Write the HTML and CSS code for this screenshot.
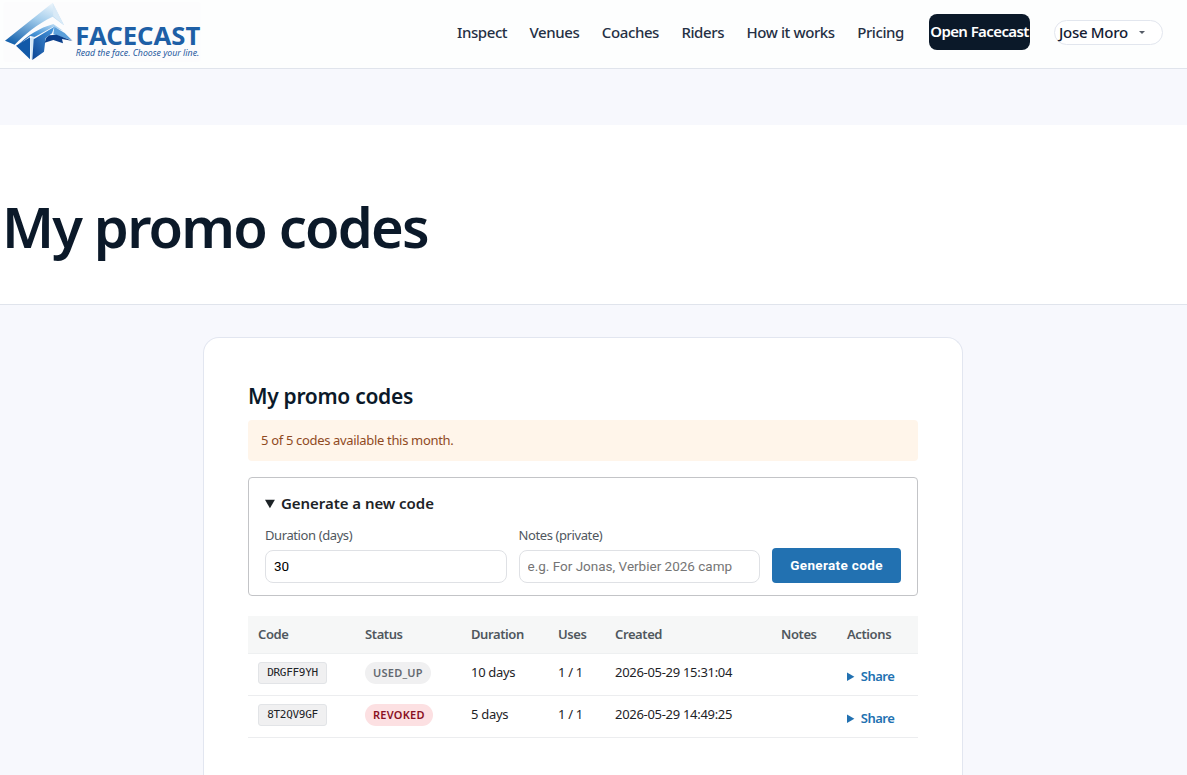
FILE: index.html
```html
<!DOCTYPE html>
<html lang="en">
<head>
  <meta charset="UTF-8" />
  <meta name="viewport" content="width=device-width, initial-scale=1" />
  <title>My promo codes - Facecast</title>
  <link rel="stylesheet" href="styles.css">
</head>
<body>

  <header class="topbar">
    <a class="logo" href="#">
      <svg width="210" height="68" viewBox="0 0 630 204" role="img" aria-label="Facecast">
        <defs>
          <linearGradient id="peak" x1="0.8" y1="0" x2="0.2" y2="1">
            <stop offset="0" stop-color="#eef6fc" />
            <stop offset="0.4" stop-color="#a3cdec" />
            <stop offset="1" stop-color="#1763ae" />
          </linearGradient>
          <linearGradient id="face" x1="1" y1="0" x2="0" y2="1">
            <stop offset="0" stop-color="#d5eafa" />
            <stop offset="0.5" stop-color="#4b98d8" />
            <stop offset="1" stop-color="#0c499b" />
          </linearGradient>
          <linearGradient id="base" x1="1" y1="0" x2="0" y2="1">
            <stop offset="0" stop-color="#4a9be0" />
            <stop offset="1" stop-color="#0a4393" />
          </linearGradient>
        </defs>
        <rect class="logo-bg" x="10" y="6" width="592" height="180" rx="10" />
        <path fill="url(#peak)" d="M158 8 L15 122 L44 134 C75 102 112 72 158 50 L192 76 Z" />
        <path fill="#d9eaf7" d="M158 8 L192 76 L160 49 Z" />
        <path fill="url(#face)" d="M52 137 C82 106 118 84 160 72 L190 93 L160 80 L104 111 L91 108 Z" />
        <path fill="#1259a8" d="M48 137 L90 112 L90 178 Z" />
        <path fill="#d7e9f7" d="M90 114 L104 110 L101 172 L93 180 Z" />
        <path fill="url(#base)" d="M101 118 L163 80 L156 100 L137 114 L132 155 L97 180 Z" />
        <path fill="#5b9fda" d="M163 80 L194 99 L216 121 L160 103 Z" />
        <path fill="#0b3f8b" d="M148 106 L170 104 L218 123 L186 117 L189 130 L160 120 L134 128 L139 113 Z" />
        <text class="logo-name" x="226" y="134" textLength="375" lengthAdjust="spacingAndGlyphs">FACECAST</text>
        <text class="logo-tag" x="227" y="168" textLength="371" lengthAdjust="spacingAndGlyphs">Read the face. Choose your line.</text>
      </svg>
    </a>
    <nav class="nav">
      <a href="#">Inspect</a>
      <a href="#">Venues</a>
      <a href="#">Coaches</a>
      <a href="#">Riders</a>
      <a href="#">How it works</a>
      <a href="#">Pricing</a>
    </nav>
    <a class="open-btn" href="#">Open Facecast</a>
    <button class="account">Jose Moro <span class="caret"></span></button>
  </header>

  <section class="hero">
    <h1>My promo codes</h1>
  </section>

  <main class="card">
    <h2>My promo codes</h2>
    <p class="notice">5 of 5 codes available this month.</p>

    <details class="generate" open>
      <summary>Generate a new code</summary>
      <form class="generate-form">
        <label>Duration (days)
          <input type="text" value="30">
        </label>
        <label>Notes (private)
          <input type="text" placeholder="e.g. For Jonas, Verbier 2026 camp">
        </label>
        <button class="generate-btn" type="button">Generate code</button>
      </form>
    </details>

    <table class="codes">
      <colgroup>
        <col class="col-code">
        <col class="col-status">
        <col class="col-duration">
        <col class="col-uses">
        <col class="col-created">
        <col class="col-notes">
        <col class="col-actions">
      </colgroup>
      <thead>
        <tr>
          <th>Code</th>
          <th>Status</th>
          <th>Duration</th>
          <th>Uses</th>
          <th>Created</th>
          <th>Notes</th>
          <th>Actions</th>
        </tr>
      </thead>
      <tbody>
        <tr>
          <td><code>DRGFF9YH</code></td>
          <td><span class="badge used">USED_UP</span></td>
          <td>10 days</td>
          <td>1 / 1</td>
          <td>2026-05-29 15:31:04</td>
          <td></td>
          <td><details class="share"><summary>Share</summary></details></td>
        </tr>
        <tr>
          <td><code>8T2QV9GF</code></td>
          <td><span class="badge revoked">REVOKED</span></td>
          <td>5 days</td>
          <td>1 / 1</td>
          <td>2026-05-29 14:49:25</td>
          <td></td>
          <td><details class="share"><summary>Share</summary></details></td>
        </tr>
      </tbody>
    </table>
  </main>

</body>
</html>
```
FILE: styles.css
```css
* {
  box-sizing: border-box;
  margin: 0;
  padding: 0;
}

body {
  height: 100vh;
  overflow: hidden;
  background: #f7f8fd;
  color: #1d2327;
  font-family: 'Segoe UI', 'Noto Sans', 'Open Sans', sans-serif;
  font-size: 13px;
}

a {
  color: inherit;
  text-decoration: none;
}

.topbar {
  display: flex;
  align-items: center;
  height: 69px;
  padding-right: 24px;
  background: #fdfefe;
  border-bottom: 1px solid #e0e4ec;
}

.logo {
  height: 68px;
  margin-right: auto;
}

.logo svg {
  display: block;
}

.logo-bg {
  fill: #fcfcfd;
}

.logo-name {
  font-size: 75px;
  font-weight: 700;
  fill: #1e5fa6;
}

.logo-tag {
  font-size: 27px;
  font-style: italic;
  fill: #1f5a9e;
}

.nav {
  display: flex;
  gap: 22.4px;
  font-size: 15px;
  font-weight: 500;
  letter-spacing: -0.4px;
  color: #253044;
  margin-top: -4px;
}

.open-btn {
  width: 101px;
  height: 36px;
  margin: -5px 0 0 25px;
  border-radius: 8px;
  background: #0b1929;
  color: #fff;
  font-size: 15px;
  font-weight: 600;
  letter-spacing: -0.6px;
  line-height: 35px;
  text-align: center;
  white-space: nowrap;
}

.account {
  display: flex;
  align-items: center;
  width: 109px;
  height: 25px;
  margin: -4px 0 0 24px;
  padding-left: 4px;
  border: 1px solid #e2e6ee;
  border-radius: 13px;
  background: #fff;
  color: #142033;
  font-family: inherit;
  font-size: 15px;
  font-weight: 500;
  letter-spacing: -0.3px;
  white-space: nowrap;
}

.caret {
  margin-left: 11px;
  border: 3px solid transparent;
  border-top: 3px solid #555c66;
  border-bottom: 0;
}

.hero {
  height: 180px;
  margin-top: 56px;
  padding: 58px 2px 0;
  background: #fff;
  border-bottom: 1px solid #e0e4ec;
}

h1 {
  font-size: 56px;
  font-weight: 600;
  line-height: 86px;
  letter-spacing: -1.8px;
  color: #0b1929;
}

.card {
  width: 760px;
  height: 438px;
  margin: 32px 0 0 203px;
  padding: 44px;
  background: #fff;
  border: 1px solid #e2e6f0;
  border-bottom: none;
  border-radius: 16px 16px 0 0;
}

h2 {
  height: 38px;
  font-size: 21px;
  font-weight: 600;
  line-height: 28px;
  letter-spacing: -0.3px;
  color: #0b1929;
}

.notice {
  height: 41px;
  padding-left: 13px;
  border-radius: 4px;
  background: #fff5ea;
  color: #8f4a1f;
  line-height: 41px;
  letter-spacing: -0.33px;
}

.generate {
  height: 119px;
  margin-top: 16px;
  padding: 13px 16px;
  border: 1px solid #c3c4c7;
  border-radius: 4px;
}

.generate summary {
  font-size: 15px;
  font-weight: 600;
  line-height: 24px;
  letter-spacing: -0.04px;
}

.generate-form {
  display: flex;
  align-items: flex-end;
  gap: 12px;
  margin-top: 9px;
}

.generate-form label {
  flex: 1;
  color: #50575e;
  line-height: 22px;
  letter-spacing: -0.4px;
}

.generate-form input {
  display: block;
  width: 100%;
  height: 33px;
  margin-top: 4px;
  padding: 0 8px 1px;
  border: 1px solid #dfe1e5;
  border-radius: 8px;
  font-family: Roboto, sans-serif;
  font-size: 13.5px;
}

.generate-form input::placeholder {
  color: #757575;
}

.generate-btn {
  width: 129px;
  height: 35px;
  padding-bottom: 1px;
  border: none;
  border-radius: 4px;
  background: #2271b1;
  color: #fff;
  font-family: Roboto, sans-serif;
  font-size: 13.5px;
  font-weight: 700;
  letter-spacing: 0.35px;
  cursor: pointer;
}

.codes {
  width: 670px;
  margin-top: 20px;
  border-collapse: collapse;
  table-layout: fixed;
}

.col-code { width: 107px; }
.col-status { width: 106px; }
.col-duration { width: 87px; }
.col-uses { width: 57px; }
.col-created { width: 166px; }
.col-notes { width: 66px; }
.col-actions { width: 81px; }

.codes th {
  height: 37px;
  padding: 0 10px;
  background: #f6f7f7;
  border-bottom: 1px solid #eef0f1;
  color: #50575e;
  font-weight: 600;
  letter-spacing: -0.4px;
  text-align: left;
}

.codes td {
  height: 42px;
  padding: 0 10px 5px;
  border-bottom: 1px solid #ecedef;
  letter-spacing: -0.3px;
  white-space: nowrap;
}

code {
  display: inline-block;
  width: 69px;
  height: 22px;
  margin-top: 2px;
  border: 1px solid #e2e4e7;
  border-radius: 3px;
  background: #f0f0f1;
  font-family: 'DejaVu Sans Mono', monospace;
  font-size: 11px;
  line-height: 20px;
  text-align: center;
}

.codes .badge {
  display: inline-block;
  height: 22px;
  margin-top: 2px;
  padding: 0 8px;
  border-radius: 11px;
  font-size: 11px;
  font-weight: 600;
  line-height: 22px;
  letter-spacing: 0.25px;
}

.used {
  background: #f0f0f1;
  color: #646970;
}

.revoked {
  background: #fce0e2;
  color: #8a1024;
}

.share {
  padding-top: 8px;
  color: #2271b1;
  font-weight: 600;
  letter-spacing: -0.5px;
}
```
